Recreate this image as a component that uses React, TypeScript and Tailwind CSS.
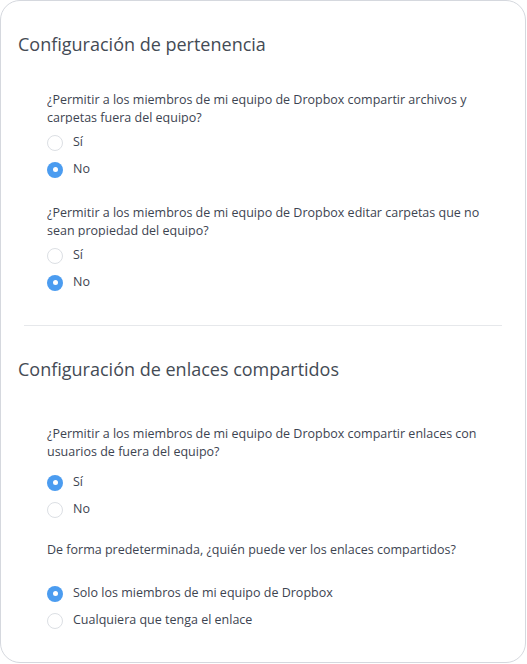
import React from 'react';

type Option = { label: string; checked: boolean };

interface Question {
  text: string;
  clipped?: boolean;
  gap: string;
  after: string;
  options: Option[];
}

const sections: { title: string; top: string; questions: Question[] }[] = [
  {
    title: 'Configuración de pertenencia',
    top: 'pt-[35px]',
    questions: [
      {
        text: '¿Permitir a los miembros de mi equipo de Dropbox compartir archivos y carpetas fuera del equipo?',
        clipped: true,
        gap: 'mt-[5px]',
        after: 'mb-[21px]',
        options: [
          { label: 'Sí', checked: false },
          { label: 'No', checked: true },
        ],
      },
      {
        text: '¿Permitir a los miembros de mi equipo de Dropbox editar carpetas que no sean propiedad del equipo?',
        clipped: true,
        gap: 'mt-[5px]',
        after: '',
        options: [
          { label: 'Sí', checked: false },
          { label: 'No', checked: true },
        ],
      },
    ],
  },
  {
    title: 'Configuración de enlaces compartidos',
    top: 'pt-[44px]',
    questions: [
      {
        text: '¿Permitir a los miembros de mi equipo de Dropbox compartir enlaces con usuarios de fuera del equipo?',
        gap: 'mt-[8px]',
        after: 'mb-[18px]',
        options: [
          { label: 'Sí', checked: true },
          { label: 'No', checked: false },
        ],
      },
      {
        text: 'De forma predeterminada, ¿quién puede ver los enlaces compartidos?',
        gap: 'mt-[21px]',
        after: '',
        options: [
          { label: 'Solo los miembros de mi equipo de Dropbox', checked: true },
          { label: 'Cualquiera que tenga el enlace', checked: false },
        ],
      },
    ],
  },
];

function Radio({ checked }: { checked: boolean }) {
  return checked ? (
    <span className="flex h-4 w-4 shrink-0 items-center justify-center rounded-full bg-[#4b9cf0]">
      <span className="h-[5px] w-[5px] rounded-full bg-white" />
    </span>
  ) : (
    <span className="h-4 w-4 shrink-0 rounded-full border border-[#dcdfe4] bg-white" />
  );
}

function QuestionBlock({ q }: { q: Question }) {
  return (
    <div className={q.after}>
      <p
        className={`pr-[30px] text-[12.5px] leading-[18px] text-[#3d4451] ${
          q.clipped ? 'h-[33px] overflow-hidden' : ''
        }`}
      >
        {q.text}
      </p>
      <div className={q.gap}>
        {q.options.map((o) => (
          <label key={o.label} className="flex h-[27px] items-center gap-[10px]">
            <Radio checked={o.checked} />
            <span className="text-[12.5px] text-[#3d4451]">{o.label}</span>
          </label>
        ))}
      </div>
    </div>
  );
}

export default function App() {
  return (
    <div className="h-[664px] w-[527px] bg-white font-['Open_Sans',sans-serif]">
      <div className="h-[663px] w-[526px] rounded-[20px] border border-[#d5d8de] bg-white">
        {sections.map((s, i) => (
          <div key={s.title}>
            {i > 0 && <div className="mx-[23px] mt-[29px] h-px bg-[#e6e8eb]" />}
            <h2 className="pl-[17px] pt-[31px] text-[18px] leading-6 text-[#444b55]">
              {s.title}
            </h2>
            <div className={`pl-[46px] ${s.top}`}>
              {s.questions.map((q) => (
                <QuestionBlock key={q.text} q={q} />
              ))}
            </div>
          </div>
        ))}
      </div>
    </div>
  );
}
